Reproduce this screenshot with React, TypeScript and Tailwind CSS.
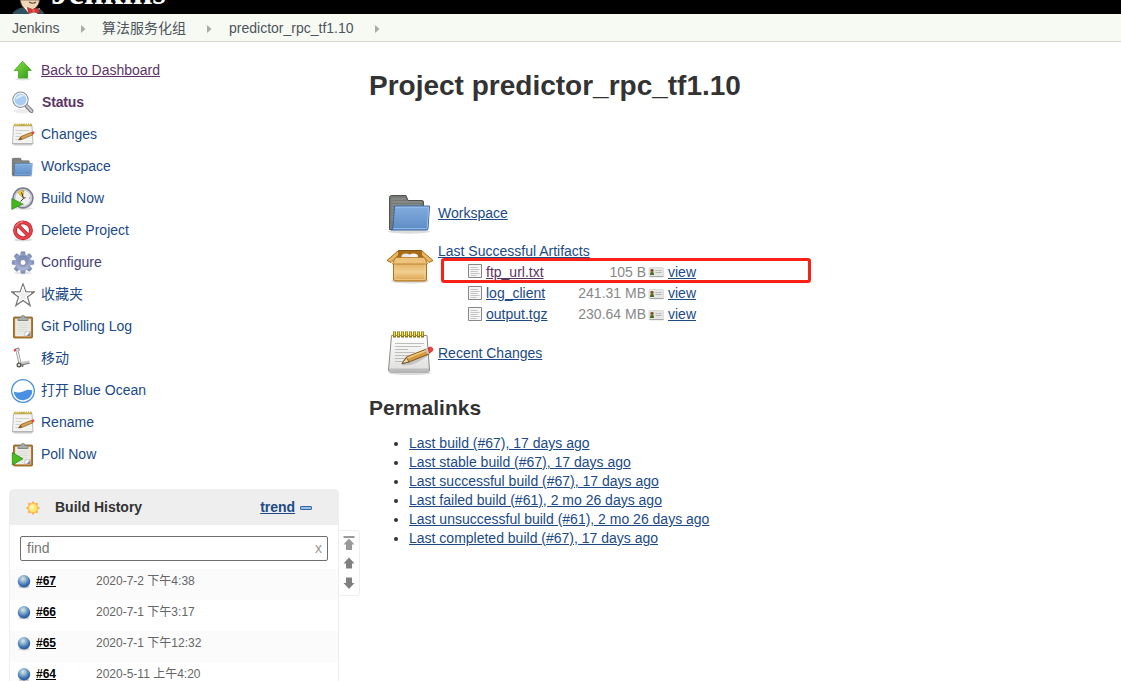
import type { ReactNode } from "react";

function Up() {
  return (
    <svg width="24" height="24" viewBox="0 0 24 24">
      <defs><linearGradient id="up" x1="0" y1="0" x2="1" y2="1"><stop offset="0" stopColor="#8be04c" /><stop offset="1" stopColor="#2f9a10" /></linearGradient></defs>
      <ellipse cx="12" cy="20" rx="8" ry="1.500" fill="#e4e4e4" />
      <path d="M11.700 2.300 20.300 11.500H16.500v7.500H7.500v-7.500H3.200Z" fill="url(#up)" stroke="#3fa31d" strokeWidth=".8" />
    </svg>
  );
}
function Search() {
  return (
    <svg width="24" height="24" viewBox="0 0 24 24">
      <ellipse cx="12" cy="20" rx="10" ry="2.200" fill="#ececec" />
      <path d="m15.500 15 5 5" stroke="#777" strokeWidth="4" strokeLinecap="round" />
      <path d="m15.800 15 4.700 5" stroke="#c9c9c9" strokeWidth="2.200" strokeLinecap="round" />
      <circle cx="9.500" cy="8.700" r="7.600" fill="#a9cdf2" stroke="#8d9196" strokeWidth="1.200" />
      <circle cx="9.500" cy="8.700" r="6.500" fill="none" stroke="#eef4fa" strokeWidth="1.300" />
      <path d="M4.500 9.200c1-5 5-6 9-4.500-3 .5-6 2-9 4.500Z" fill="#e1effc" />
    </svg>
  );
}
function Notepad() {
  return (
    <svg width="48" height="48" viewBox="0 0 48 48">
      <defs><linearGradient id="pad" x1="0" y1="0" x2="0" y2="1"><stop offset="0" stopColor="#fff" /><stop offset="1" stopColor="#dededc" /></linearGradient></defs>
      <ellipse cx="23" cy="44" rx="21" ry="2" fill="#ddd" />
      <path d="M4.500 6.500h35.500l2.500 34.500q0 2-2 2H3.500q-2 0-2-2Z" fill="url(#pad)" stroke="#898989" />
      <path d="M2 39.500h40v3H2Z" fill="#bcbcbc" />
      <path d="M8 14.500h29M8 17.500h26M8 20.500h13M8 23.500h20M8 26.500h15M8 29.500h12M8 32.500h9" stroke="#bdbdbb" strokeWidth="1" />
      <path d="M6 5.500h32" stroke="#8b7410" strokeWidth="6" strokeDasharray="3 1" />
      <path d="M6.800 5h31" stroke="#f1d83a" strokeWidth="4" strokeDasharray="1.400 2.600" />
      <path d="M15 35q13 1 28-12" fill="none" stroke="#777" strokeOpacity=".3" strokeWidth="3" />
      <path d="m15 34.500 4.500-6.500 20-8 2.500 5-20 8Z" fill="#d19a42" stroke="#815519" />
      <path d="m15 34.500 4.500-6 2.500 4.500Z" fill="#f0d1a0" stroke="#594727" strokeWidth=".7" />
      <path d="m20.500 29 19-7.500" stroke="#f1c77c" strokeWidth="1.500" />
      <path d="m38.500 20.300 2.500-1 2 5-2.500 1Z" fill="#c6c6c6" />
      <path d="m41 19 2-1q4 .5 2.500 4l-3 2Z" fill="#ee4147" stroke="#bd2028" strokeWidth=".7" />
    </svg>
  );
}
function SmallNotepad() {
  return (
    <svg width="24" height="24" viewBox="0 0 24 24">
      <path d="M3 22h18" stroke="#e2e2e2" strokeWidth="2" />
      <path d="M2.500 2.500h18.500l1 18.500H1.500Z" fill="#f4f4f2" stroke="#a9a9a9" strokeWidth=".8" />
      <path d="M1.500 20.500h20.500" stroke="#b5b5b5" />
      <path d="M4.500 7.500h14M4.500 10.500h6M4.500 13.500h7M4.500 16.500h4" stroke="#c8c8c6" strokeWidth=".8" />
      <path d="M3.500 2h17" stroke="#9b851c" strokeWidth="2.600" strokeDasharray="1.600 .6" />
      <path d="M4 2h16" stroke="#e9cc38" strokeWidth="1.800" strokeDasharray=".9 1.300" />
      <path d="m7.500 17 2.500-3.500 10.500-4.200 1.300 2.500-10.500 4.500Z" fill="#d9a34c" stroke="#81551d" strokeWidth=".7" />
      <path d="m7.500 17 2.300-3 1.200 2.200Z" fill="#745328" />
      <path d="m20.300 9.300 2-1q1.700.4 1 2l-1.700 1.300Z" fill="#e64035" />
    </svg>
  );
}
function Folder({ size = 24 }: { size?: number }) {
  return (
    <svg width={size} height={size} viewBox="0 0 48 48">
      <defs><linearGradient id="folder" x1="0" y1="0" x2="0" y2="1"><stop offset="0" stopColor="#83ade0" /><stop offset="1" stopColor="#5d8cc4" /></linearGradient></defs>
      <ellipse cx="22" cy="42.500" rx="21" ry="2.200" fill="#ddd" />
      <path d="M2.500 8.500q0-2 2-2h14.500l2 5h14q1.500 0 1.500 1.500V40.500H2.500Z" fill="#777976" stroke="#50534f" />
      <path d="M4.500 10h14M4.500 13h30M4.500 16h29M4.500 19h3M4.500 22h3M4.500 25h2.500M4.500 28h2.500M4.500 31h2" stroke="#969895" strokeWidth="1" />
      <path d="M7.500 17h35l-1.500 22.500q0 1.500-2 1.500H4q1.500 0 2-2Z" fill="url(#folder)" stroke="#3768a4" />
      <path d="M8.500 18.200h33l-1.300 20q0 1.500-1.500 1.500H6.500" fill="none" stroke="#9bc0eb" />
    </svg>
  );
}
function Clock() {
  return (
    <svg width="24" height="24" viewBox="0 0 24 24">
      <ellipse cx="13" cy="21.500" rx="9" ry="1.300" fill="#e3e3e3" />
      <circle cx="12" cy="11" r="9.800" fill="#eff0ed" stroke="#7c7e8e" strokeWidth="1.700" />
      <circle cx="12" cy="11" r="8.300" fill="none" stroke="#c1c2d0" strokeWidth="1.300" />
      <path d="m12 11-5.500-5.500q3-2.800 6.500-2Z" fill="#e9c945" stroke="#ad963d" strokeWidth=".4" />
      <path d="m10.500 5.500 2 6-3 3M12.500 11.500l2-1" fill="none" stroke="#333" strokeWidth="1" />
      <path d="M12 3.500v1m7 6.500h-1m-6 7v-1" stroke="#777" />
      <path d="M.800 11.500v11l11-5.500Z" fill="#45b51b" stroke="#2a8915" strokeWidth=".7" />
    </svg>
  );
}
function Forbidden() {
  return (
    <svg width="24" height="24" viewBox="0 0 24 24">
      <ellipse cx="12" cy="20.800" rx="9" ry="1.700" fill="#ddd" />
      <circle cx="12" cy="11.300" r="8" fill="#fbfbfb" stroke="#bc1723" strokeWidth="3.800" />
      <path d="m6.500 5.800 11 11" stroke="#bc1723" strokeWidth="3.600" />
      <circle cx="12" cy="11.300" r="8" fill="none" stroke="#e44349" strokeWidth="2.600" />
      <path d="m6.300 5.600 11.400 11.400" stroke="#e44349" strokeWidth="2.400" />
      <path d="M4.500 7.500Q7 3 12 2.700" fill="none" stroke="#f49599" />
    </svg>
  );
}
function Gear() {
  return (
    <svg width="24" height="24" viewBox="0 0 24 24">
      <defs><linearGradient id="gear" x1="0" y1="0" x2="0" y2="1"><stop offset="0" stopColor="#7186b4" /><stop offset="1" stopColor="#b4b8d9" /></linearGradient></defs>
      <ellipse cx="12" cy="22" rx="9" ry="1.500" fill="#e6e6e6" />
      {[0, 45, 90, 135, 180, 225, 270, 315].map((a) => (
        <path key={a} d="m9.200 6 1-5.300h3.600l1 5.300Z" transform={`rotate(${a} 12 11.500)`} fill="url(#gear)" stroke="#7482a9" strokeWidth=".5" />
      ))}
      <circle cx="12" cy="11.500" r="7.300" fill="url(#gear)" />
      <circle cx="12" cy="11.500" r="4.500" fill="none" stroke="#8794ba" strokeWidth=".8" />
      <circle cx="12" cy="11.500" r="3" fill="#fff" stroke="#66749c" strokeWidth=".8" />
    </svg>
  );
}
function Star() {
  return (
    <svg width="24" height="24" viewBox="0 0 24 24">
      <path d="m12 1 2.900 8h8.300l-6.700 5.100 2.600 8.400L12 17.400l-7.100 5.100 2.600-8.400L.8 9h8.300Z" fill="#ededed" stroke="#777" strokeWidth="1.300" />
      <path d="m12 3.500 2 6.500h6l-5 3.600 1.900 6-4.900-3.500-4.900 3.500 1.900-6L4 10h6Z" fill="none" stroke="#fff" />
    </svg>
  );
}
function Clipboard({ play = false }: { play?: boolean }) {
  return (
    <svg width="24" height="24" viewBox="0 0 24 24">
      <rect x="2.500" y="2" width="19" height="21" rx="1" fill="#b77a29" stroke="#87581e" strokeWidth=".8" />
      <path d="M4.500 4h15v17h-15Z" fill="#e9e9e6" stroke="#fff" strokeWidth=".6" />
      <path d="M7 8.500h10M7 10.500h9M7 12.500h10M7 14.500h9M7 16.500h6" stroke="#d8d8d6" strokeWidth=".8" />
      <path d="M7 5V2.500h3q0-2 2-2t2 2h3V5.500H7Z" fill="#a9aca5" stroke="#777a74" strokeWidth=".8" />
      <path d="M13 21q1.500-1.500 1-4.500 2.500 1 5.500 0L16 21Z" fill="#fff" stroke="#aaa" strokeWidth=".6" />
      <path d="M15.500 21h4v-4Z" fill="#888" />
      {play && <path d="M1.300 9.500v12.500l10.500-6.200Z" fill="#4abc1b" stroke="#288813" strokeWidth=".8" />}
    </svg>
  );
}
function HandTruck() {
  return (
    <svg width="24" height="24" viewBox="0 0 24 24">
      <path d="m8 16.700 10.500-1.700" stroke="#c9c9c7" strokeWidth="3" />
      <path d="m7.500 18.500 11-2.200" stroke="#73736f" strokeWidth="1" />
      <path d="m6 3.500 3 13" stroke="#8a8b88" strokeWidth="3" />
      <path d="m6 4 3 12" stroke="#ececea" strokeWidth="1.500" />
      <path d="M3.500 3.500q1-2 4-2.300l1 2.300" fill="none" stroke="#8e8e8e" strokeWidth="1.200" />
      <path d="m3 4 1.800-1.500" stroke="#ec2936" strokeWidth="1.800" />
      <circle cx="8" cy="18" r="1.900" fill="#ddd" stroke="#50524f" strokeWidth="1.200" />
      <circle cx="11.500" cy="19" r="1.100" fill="#666" />
    </svg>
  );
}
function Ocean() {
  return (
    <svg width="24" height="24" viewBox="0 0 24 24">
      <circle cx="12" cy="12" r="11.300" fill="#fff" stroke="#4a90e2" strokeWidth="1.300" />
      <path d="M2.700 12.500q4.500 2 8.800.3c5-2.300 7.500-2.300 9.800-1.300a9.300 9.300 0 0 1-18.600 1Z" fill="#4a90e2" />
    </svg>
  );
}
function Box() {
  return (
    <svg width="48" height="48" viewBox="0 0 48 48">
      <defs><linearGradient id="box" x1="0" y1="0" x2="0" y2="1"><stop offset="0" stopColor="#dfa956" /><stop offset=".55" stopColor="#f2cf91" /><stop offset="1" stopColor="#dba047" /></linearGradient></defs>
      <ellipse cx="24" cy="39" rx="19" ry="2.500" fill="#ddd" />
      <path d="M12.500 8.500h23l3.500 9H9Z" fill="#a66c18" stroke="#855312" />
      <ellipse cx="20" cy="14.500" rx="4.500" ry="3" fill="#e8e8e8" /><ellipse cx="27.500" cy="14.500" rx="4.500" ry="3" fill="#f5f5f5" />
      <path d="M7.500 19h33v18q0 2-2 2h-29q-2 0-2-2Z" fill="url(#box)" stroke="#ac701b" />
      <path d="M9 20.500h30v17H9Z" fill="none" stroke="#f4d398" strokeOpacity=".7" />
      <path d="m12.500 8.500-11.500 10 4 2 7.500-7.500ZM35.500 8.500l11.500 10-4 2-7.500-7.500Z" fill="#e7b868" stroke="#a76a12" />
      <path d="M9.500 15.500h29l3 6.500H6.500Z" fill="#edc27c" stroke="#b3761e" strokeWidth=".8" />
    </svg>
  );
}
function Doc() {
  return (
    <svg width="16" height="16" viewBox="0 0 16 16">
      <path d="M1.500 1.500h13v13h-13Z" fill="#f5f5f5" stroke="#878787" />
      <path d="M3.500 4.500h7M3.500 6.500h9M3.500 8.500h7M3.500 10.500h9M3.500 12.500h6" stroke="#c5c5c5" />
    </svg>
  );
}
function Card() {
  return (
    <svg width="16" height="16" viewBox="0 0 16 16">
      <rect x="1" y="3.500" width="14.500" height="9.500" rx="1" fill="#e6e6e4" stroke="#ccc" strokeWidth=".6" />
      <path d="M1.500 12.500h14" stroke="#a9a9a9" />
      <path d="M2 5h4v6H2Z" fill="#c8c3a5" /><circle cx="4" cy="6.500" r="1.400" fill="#794f2b" /><path d="M2 11q0-3 2-3t2 3Z" fill="#486b24" />
      <path d="M7.500 6.500h2m1 0h3M7.500 8.500h6" stroke="#b5b5b5" />
    </svg>
  );
}
function Ball() {
  return (
    <svg width="16" height="16" viewBox="0 0 16 16">
      <defs><radialGradient id="ball" cx=".42" cy=".3" r=".7"><stop offset="0" stopColor="#dce7e6" /><stop offset=".35" stopColor="#91b5d0" /><stop offset=".75" stopColor="#3c70b3" /><stop offset="1" stopColor="#2b5898" /></radialGradient></defs>
      <ellipse cx="8" cy="14" rx="5.500" ry="1.300" fill="#ccc" />
      <circle cx="8" cy="8.300" r="6.200" fill="url(#ball)" />
    </svg>
  );
}
function Sun() {
  return (
    <svg width="16" height="16" viewBox="0 0 16 16">
      <path d="m8 .8 1.700 2.700 3.300-.7-.6 3.400L15.200 8l-2.800 1.800.6 3.400-3.300-.7L8 15.200l-1.700-2.700-3.300.7.6-3.400L.8 8l2.800-1.800L3 2.800l3.300.7Z" fill="#f8ad4c" />
      <circle cx="8" cy="8" r="4.500" fill="#fde874" stroke="#f6bd53" strokeWidth=".7" /><circle cx="7" cy="7" r="1.900" fill="#fff8bd" />
    </svg>
  );
}
function Butler() {
  return (
    <svg width="34" height="14" viewBox="0 0 34 14">
      <path d="M.500 14q1-4 9.500-6.500l14 .5q7 1 8 6Z" fill="#335061" />
      <path d="M8 0q1 6 5 9l7 1q7-3 7.500-10Z" fill="#f0d6b7" stroke="#5e4736" strokeWidth=".7" />
      <path d="m12 7 5 7h8l3-6-6 2Z" fill="#f5f3ed" />
      <path d="M17 2q4 2.500 7 0" fill="none" stroke="#6d4c3c" strokeWidth="1.200" />
      <path d="m15.500 7.500 5 2L26 8l2 5.500-6-1.500-5.500 1.500Z" fill="#d33833" stroke="#8b1e1c" strokeWidth=".6" />
      <circle cx="21.500" cy="10.500" r="1.500" fill="#ef5a52" />
    </svg>
  );
}

type Task = { icon: ReactNode; label: string; cls?: string };
const tasks: Task[] = [
  { icon: <Up />, label: "Back to Dashboard", cls: "text-[#5c3566] underline" },
  { icon: <Search />, label: "Status", cls: "font-bold text-[#5c3566] pl-px tracking-[-0.15px]" },
  { icon: <SmallNotepad />, label: "Changes" },
  { icon: <Folder />, label: "Workspace" },
  { icon: <Clock />, label: "Build Now" },
  { icon: <Forbidden />, label: "Delete Project" },
  { icon: <Gear />, label: "Configure", cls: "text-[#453d75]" },
  { icon: <Star />, label: "收藏夹" },
  { icon: <Clipboard />, label: "Git Polling Log" },
  { icon: <HandTruck />, label: "移动" },
  { icon: <Ocean />, label: "打开 Blue Ocean" },
  { icon: <SmallNotepad />, label: "Rename" },
  { icon: <Clipboard play />, label: "Poll Now" },
];
const builds = [["#67", "2020-7-2 下午4:38"], ["#66", "2020-7-1 下午3:17"], ["#65", "2020-7-1 下午12:32"], ["#64", "2020-5-11 上午4:20"]];
const artifacts = [["ftp_url.txt", "105 B"], ["log_client", "241.31 MB"], ["output.tgz", "230.64 MB"]];
const permalinks = [
  "Last build (#67), 17 days ago",
  "Last stable build (#67), 17 days ago",
  "Last successful build (#67), 17 days ago",
  "Last failed build (#61), 2 mo 26 days ago",
  "Last unsuccessful build (#61), 2 mo 26 days ago",
  "Last completed build (#67), 17 days ago",
];
const LINK = "text-[#204a87] underline";

function Crumb({ label, cls }: { label: string; cls: string }) {
  return (
    <div className={`flex items-center justify-between ${cls}`}>
      <span>{label}</span>
      <svg width="5" height="8" viewBox="0 0 5 8"><path d="M0 0v8l4.500-4Z" fill="#aaa" /></svg>
    </div>
  );
}

export default function App() {
  return (
    <div className="flex h-[681px] w-[1121px] flex-col overflow-hidden bg-white font-['Liberation_Sans','Noto_Sans_CJK_SC',sans-serif] text-[14px] leading-[19px] text-[#333]">
      <header className="flex h-[14px] shrink-0 overflow-hidden bg-black pl-[12px]">
        <Butler />
        <span className="-mt-[25px] ml-[5px] font-['Liberation_Serif',serif] text-[35px] leading-[36px] font-bold text-white">Jenkins</span>
      </header>
      <nav className="flex h-[28px] shrink-0 items-center border-b border-[#d3d7cf] bg-[#f6faf2] pt-[2px] pl-[12px] text-[#4d545d]">
        <Crumb label="Jenkins" cls="w-[74px]" />
        <Crumb label="算法服务化组" cls="ml-[16px] w-[110px]" />
        <Crumb label="predictor_rpc_tf1.10" cls="ml-[17px] w-[151px]" />
      </nav>
      <div className="flex min-h-0 flex-1">
        <aside className="w-[369px] shrink-0 pt-[12px]">
          <ul className="pl-[11px]">
            {tasks.map((t) => (
              <li key={t.label} className="flex h-8 items-center">
                <span className="w-[30px] shrink-0 pt-[2px]">{t.icon}</span>
                <a className={t.cls ?? "text-[#204a87]"}>{t.label}</a>
              </li>
            ))}
          </ul>
          <div className="mt-[19px] flex items-start pl-[9px]">
            <section className="h-[200px] w-[330px] rounded-t-[5px] border border-[#eee]">
              <div className="flex h-[35px] items-center bg-[#eee] pl-[15px] font-bold">
                <Sun />
                <span className="ml-[14px]">Build History</span>
                <a className={`ml-[118px] ${LINK}`}>trend</a>
                <span className="ml-[5px] h-[4px] w-[12px] rounded-[1px] border border-[#3465a4] bg-[#9bbce5]" />
              </div>
              <div className="mx-[10px] mt-[11px] flex h-[25px] items-center justify-between rounded-[2px] border border-[#6f6f6f] px-[6px] text-[#757575]">
                <span>find</span><span className="-mr-px text-[#999]">x</span>
              </div>
              <ul className="mt-[8px]">
                {builds.map(([n, d], i) => (
                  <li key={n} className={`flex h-[31px] items-start pl-[6px] pt-[4px] ${i % 2 ? "" : "bg-[#fbfbfb]"}`}>
                    <Ball />
                    <a className="ml-[4px] w-[60px] text-[12px] leading-[16px] font-bold text-black underline">{n}</a>
                    <span className="text-[12px] leading-[16px] text-[#666]">{d}</span>
                  </li>
                ))}
              </ul>
            </section>
            <div className="mt-[41px] flex h-[66px] w-[21px] items-start rounded-r-[4px] border border-l-0 border-[#eee] pl-[4px] pt-[5px]">
              <svg width="12" height="56" viewBox="0 0 12 56">
                <path d="M.5 0h11v2h-11ZM6 2.500l5.500 6H9v5.500H3V8.500H.500Z" fill="#999" />
                <path d="m6 21.500 5.500 6H9v5H3v-5H.500ZM6 53l5.500-6H9v-5.500H3V47H.500Z" fill="#808080" />
              </svg>
            </div>
          </div>
        </aside>
        <main className="flex-1">
          <h1 className="mt-[27px] text-[28px] leading-[34px] font-bold">Project predictor_rpc_tf1.10</h1>
          <div className="mt-[88px] flex h-[44px] items-center pl-[18px]">
            <Folder size={48} />
            <a className={`ml-[3px] ${LINK}`}>Workspace</a>
          </div>
          <div className="mt-[7px] flex h-[82px] items-start pl-[17px]">
            <Box />
            <div className="ml-[4px] w-[380px]">
              <a className={`block leading-[18px] ${LINK}`}>Last Successful Artifacts</a>
              {artifacts.map(([n, s], i) => (
                <div key={n} className={`flex items-center ${i ? "h-[21px] pl-[29px]" : "-mt-[2px] ml-[3px] h-[25px] w-[370px] rounded-[3px] border-[3px] border-[#fc2117] pt-[3px] pl-[23px]"}`}>
                  <span className="pb-[2px]"><Doc /></span>
                  <a className={`ml-[3px] w-[70px] ${i ? LINK : "text-[#5c3566] underline"}`}>{n}</a>
                  <span className="w-[90px] text-right whitespace-nowrap text-[#888]">{s}</span>
                  <span className="ml-[2px]"><Card /></span>
                  <a className={`ml-[4px] ${LINK}`}>view</a>
                </div>
              ))}
            </div>
          </div>
          <div className="mt-[5px] flex h-[48px] items-center pl-[18px]">
            <Notepad />
            <a className={`ml-[3px] ${LINK}`}>Recent Changes</a>
          </div>
          <h2 className="mt-[18px] text-[21px] leading-[26px] font-bold">Permalinks</h2>
          <ul className="mt-[13px] list-disc pl-[40px]">
            {permalinks.map((p) => <li key={p} className="h-[19px]"><a className={LINK}>{p}</a></li>)}
          </ul>
        </main>
      </div>
    </div>
  );
}
